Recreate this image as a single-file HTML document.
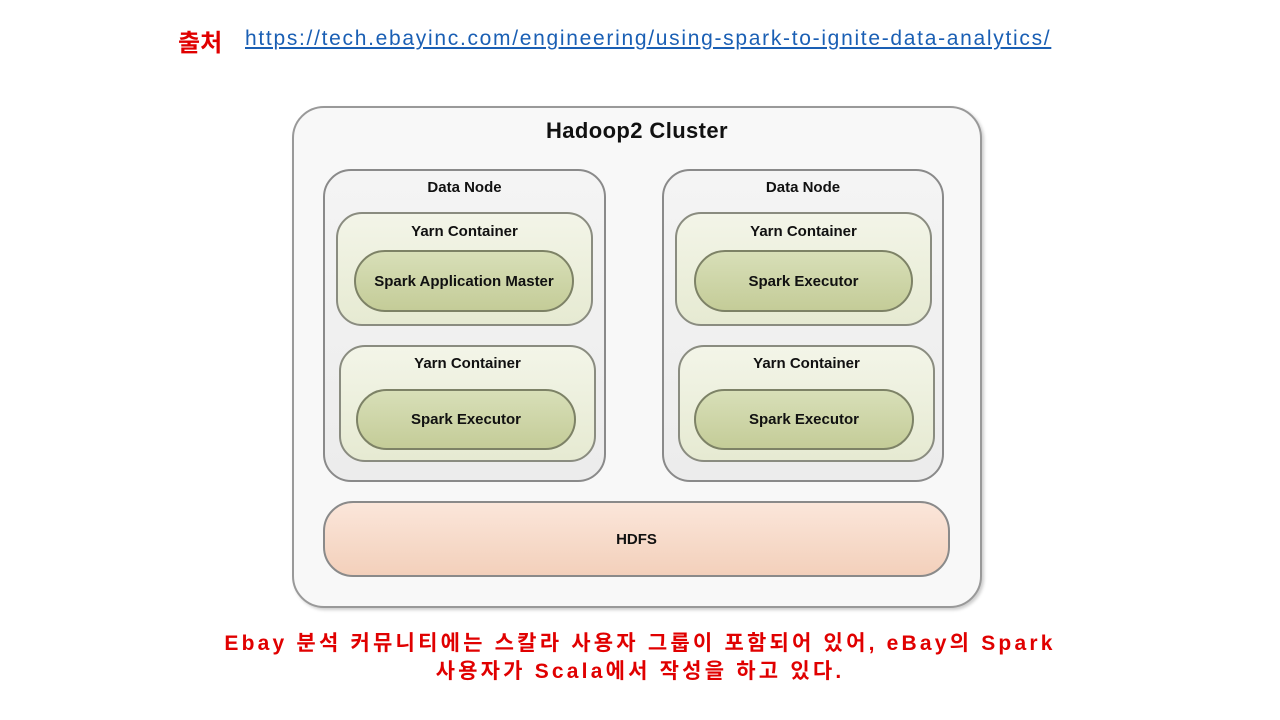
<!DOCTYPE html><html><head><meta charset="utf-8"><style>
body{margin:0;width:1280px;height:720px;background:#fff;position:relative;overflow:hidden;font-family:"Liberation Sans","Noto Sans CJK KR",sans-serif}
.a{position:absolute;box-sizing:border-box}
.t{position:absolute;text-align:center;font-weight:bold;color:#111;font-size:15px;left:0;right:0}
.node{background:linear-gradient(#f4f4f4,#ececec);border:2px solid #8a8a8a;border-radius:28px}
.yc{background:linear-gradient(#f3f5e8,#e6ead2);border:2px solid #8a8c80;border-radius:26px}
.pill{background:linear-gradient(#d8dfb8,#c4cc98);border:2px solid #7d8266;border-radius:31px;display:flex;align-items:center;justify-content:center;font-weight:bold;font-size:15px;color:#111}
</style></head><body>
<div class="a" style="left:178px;top:23px;font-size:24px;font-weight:bold;color:#e00000">출처</div>
<div class="a" style="left:245px;top:27px;font-size:21px;letter-spacing:1.7px;color:#1a5fb4;text-decoration:underline;white-space:nowrap">https://tech.ebayinc.com/engineering/using-spark-to-ignite-data-analytics/</div>

<div class="a" style="left:292px;top:106px;width:690px;height:502px;border:2px solid #999;border-radius:32px;background:#f8f8f8;box-shadow:2px 2px 3px #ccc"></div>
<div class="a" style="left:292px;top:118px;width:690px;text-align:center;font-weight:bold;font-size:22px;letter-spacing:0.4px;color:#111">Hadoop2 Cluster</div>

<div class="a node" style="left:323px;top:169px;width:283px;height:313px"><div class="t" style="top:8px">Data Node</div></div>
<div class="a node" style="left:662px;top:169px;width:282px;height:313px"><div class="t" style="top:8px">Data Node</div></div>

<div class="a yc" style="left:336px;top:212px;width:257px;height:114px"><div class="t" style="top:9px">Yarn Container</div></div>
<div class="a yc" style="left:339px;top:345px;width:257px;height:117px"><div class="t" style="top:8px">Yarn Container</div></div>
<div class="a yc" style="left:675px;top:212px;width:257px;height:114px"><div class="t" style="top:9px">Yarn Container</div></div>
<div class="a yc" style="left:678px;top:345px;width:257px;height:117px"><div class="t" style="top:8px">Yarn Container</div></div>

<div class="a pill" style="left:354px;top:250px;width:220px;height:62px">Spark Application Master</div>
<div class="a pill" style="left:356px;top:389px;width:220px;height:61px">Spark Executor</div>
<div class="a pill" style="left:694px;top:250px;width:219px;height:62px">Spark Executor</div>
<div class="a pill" style="left:694px;top:389px;width:220px;height:61px">Spark Executor</div>

<div class="a pill" style="left:323px;top:501px;width:627px;height:76px;border-radius:30px;background:linear-gradient(#fbe6da,#f3d0bb);border-color:#8a8a8a">HDFS</div>

<div class="a" style="left:0;width:1280px;top:630px;text-align:center;font-size:21px;letter-spacing:3.2px;font-weight:bold;color:#e00000;line-height:28px;white-space:nowrap">Ebay 분석 커뮤니티에는 스칼라 사용자 그룹이 포함되어 있어, eBay의 Spark<br>사용자가 Scala에서 작성을 하고 있다.</div>
</body></html>
